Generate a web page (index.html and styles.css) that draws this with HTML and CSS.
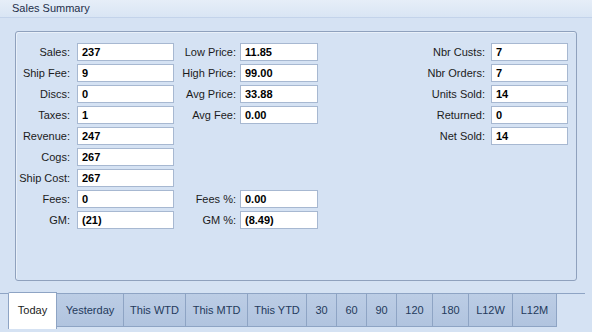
FILE: index.html
```html
<!DOCTYPE html>
<html lang="en">
<head>
  <meta charset="UTF-8">
  <title>Sales Summary</title>
  <link rel="stylesheet" href="styles.css">
</head>
<body>
  <div class="panel">
    <div class="panel-header">Sales Summary</div>

    <div class="tab-page">
      <div class="group-box">
        <div class="col col-left">
          <div class="field"><span class="label">Sales:</span><span class="value">237</span></div>
          <div class="field"><span class="label">Ship Fee:</span><span class="value">9</span></div>
          <div class="field"><span class="label">Discs:</span><span class="value">0</span></div>
          <div class="field"><span class="label">Taxes:</span><span class="value">1</span></div>
          <div class="field"><span class="label">Revenue:</span><span class="value">247</span></div>
          <div class="field"><span class="label">Cogs:</span><span class="value">267</span></div>
          <div class="field"><span class="label">Ship Cost:</span><span class="value">267</span></div>
          <div class="field"><span class="label">Fees:</span><span class="value">0</span></div>
          <div class="field"><span class="label">GM:</span><span class="value">(21)</span></div>
        </div>

        <div class="col col-mid">
          <div class="field"><span class="label">Low Price:</span><span class="value">11.85</span></div>
          <div class="field"><span class="label">High Price:</span><span class="value">99.00</span></div>
          <div class="field"><span class="label">Avg Price:</span><span class="value">33.88</span></div>
          <div class="field"><span class="label">Avg Fee:</span><span class="value">0.00</span></div>
          <div class="field push"><span class="label">Fees %:</span><span class="value">0.00</span></div>
          <div class="field"><span class="label">GM %:</span><span class="value">(8.49)</span></div>
        </div>

        <div class="col col-right">
          <div class="field"><span class="label">Nbr Custs:</span><span class="value">7</span></div>
          <div class="field"><span class="label">Nbr Orders:</span><span class="value">7</span></div>
          <div class="field"><span class="label">Units Sold:</span><span class="value">14</span></div>
          <div class="field"><span class="label">Returned:</span><span class="value">0</span></div>
          <div class="field"><span class="label">Net Sold:</span><span class="value">14</span></div>
        </div>
      </div>
    </div>

    <div class="tabs">
      <div class="tab active w-today">Today</div>
      <div class="tab w-67">Yesterday</div>
      <div class="tab w-62">This WTD</div>
      <div class="tab w-62">This MTD</div>
      <div class="tab w-59">This YTD</div>
      <div class="tab w-30">30</div>
      <div class="tab w-30">60</div>
      <div class="tab w-30">90</div>
      <div class="tab w-36">120</div>
      <div class="tab w-36">180</div>
      <div class="tab w-44">L12W</div>
      <div class="tab w-44">L12M</div>
    </div>
  </div>
</body>
</html>
```

FILE: styles.css
```css
* {
  box-sizing: border-box;
}

body {
  margin: 0;
  font-family: "Liberation Sans", Arial, sans-serif;
  font-size: 11px;
  color: #1b1b1b;
  background-color: #d5e2f3;
}

.panel {
  width: 592px;
  height: 332px;
  overflow: hidden;
}

.panel-header {
  height: 18px;
  line-height: 16px;
  padding-left: 12px;
  color: #1e2f4a;
  font-size: 11px;
  background: linear-gradient(#e6eef8, #d9e5f4);
  border-bottom: 1px solid #c3d3ea;
}

.tab-page {
  width: 585px;
  padding: 13px 0 12px 15px;
  border-bottom: 1px solid #8ea4c4;
}

.group-box {
  display: flex;
  width: 562px;
  height: 250px;
  padding-top: 11px;
  border: 1px solid #8fa1bd;
  border-radius: 3px;
  box-shadow: inset 1px 1px 0 #e9f0f9;
}

.col {
  display: flex;
  flex-direction: column;
  gap: 3px;
}

.field {
  display: flex;
  height: 18px;
}

.field.push {
  margin-top: 63px;
}

.label {
  text-align: right;
  line-height: 18px;
  white-space: nowrap;
}

.value {
  background: #fff;
  border: 1px solid #a7b8d1;
  padding-left: 4px;
  font-weight: bold;
  line-height: 16px;
  color: #000;
}

.col-left .label {
  width: 61px;
  padding-right: 7px;
}

.col-left .value {
  width: 97px;
}

.col-mid .label {
  width: 66px;
  padding-right: 4px;
}

.col-mid .value {
  width: 78px;
}

.col-right .label {
  width: 173px;
  padding-right: 6px;
}

.col-right .value {
  width: 77px;
}

/* Period tabs */
.tabs {
  display: flex;
  align-items: flex-start;
  padding-left: 8px;
  margin-top: -1px;
}

.tab {
  height: 34px;
  line-height: 32px;
  text-align: center;
  color: #243a5c;
  background: linear-gradient(#bccde5, #b1c4df);
  border: 1px solid #8ea4c4;
  border-left: none;
  white-space: nowrap;
}

.tab.active {
  height: 37px;
  margin-top: -1px;
  line-height: 35px;
  color: #1b1b1b;
  background: #fff;
  border-left: 1px solid #8ea4c4;
  border-bottom: none;
  border-radius: 2px 0 0 0;
}

.w-today { width: 49px; }
.w-67 { width: 67px; }
.w-62 { width: 62px; }
.w-59 { width: 59px; }
.w-44 { width: 44px; }
.w-36 { width: 36px; }
.w-30 { width: 30px; }
```
